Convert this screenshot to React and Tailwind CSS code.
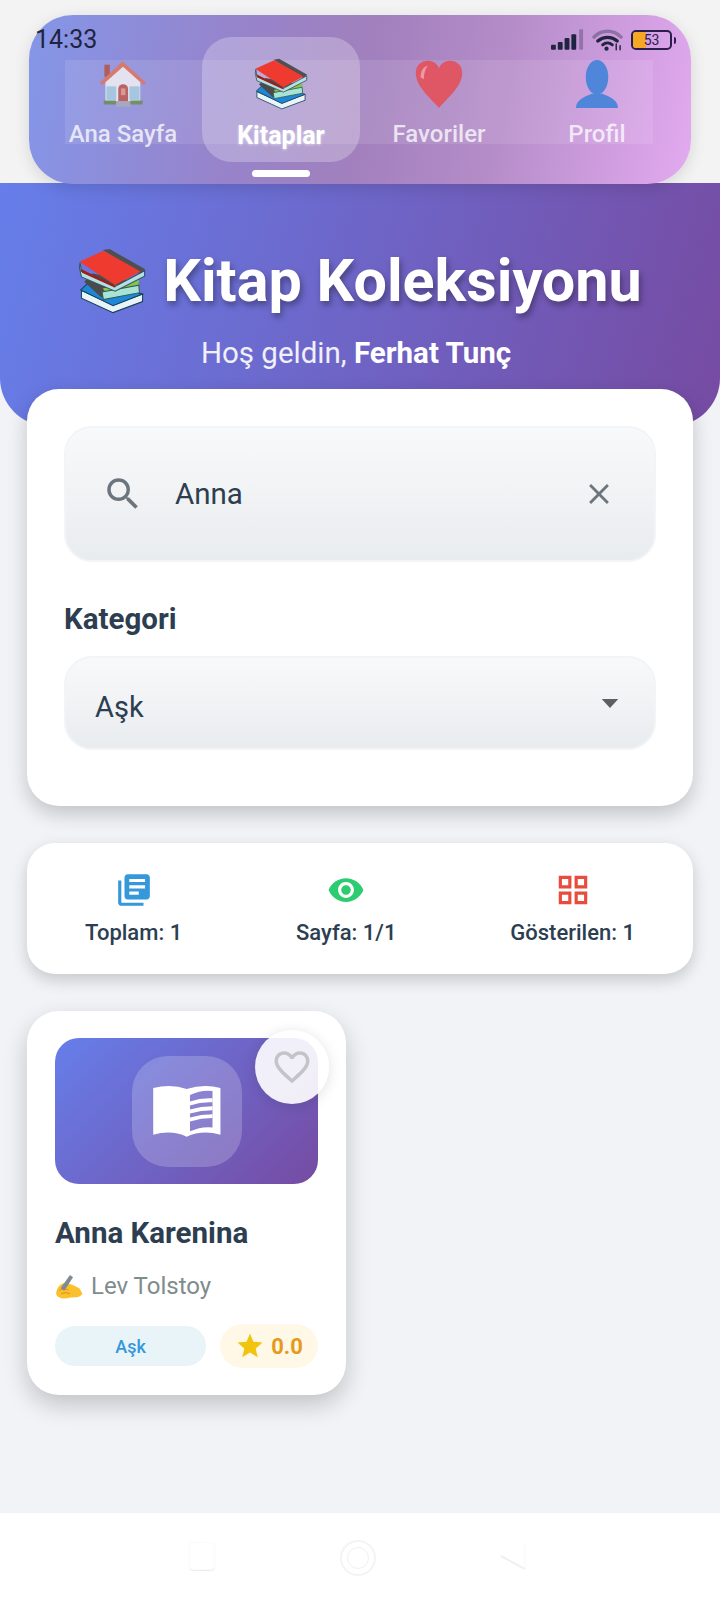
import { MdSearch, MdClose, MdLibraryBooks, MdVisibility, MdGridView, MdFavoriteBorder, MdStar } from 'react-icons/md';

// Emoji drawings: the sandbox has no colour emoji font
const BooksEmoji = ({ className }) => (
  <svg viewBox="28 24 198 192" className={className}>
    <path d="M38 148 130 190 216 158 216 180 130 212 38 170Z" fill="#e8f4f6" stroke="#173f5a" strokeWidth="3" />
    <path d="M36 146 66 118 216 158 130 192Z" fill="#1d87d8" stroke="#173f5a" strokeWidth="3" />
    <path d="M46 122 70 98 205 124 205 150 96 168Z" fill="#4b4b4b" />
    <path d="M100 142 205 116 205 134 108 152Z" fill="#8bc34a" />
    <path d="M98 152 205 132 207 154 102 174Z" fill="#a8e3d3" stroke="#2c5f55" strokeWidth="3" />
    <path d="M34 66 38 92 136 136 222 90 222 106 136 150 38 108 32 80Z" fill="#b4dfe3" stroke="#2f5360" strokeWidth="3" />
    <path d="M100 30 120 27 224 86 208 98Z" fill="#4f4f52" />
    <path d="M32 64 102 32 210 92 136 132Z" fill="#ef3a2f" />
    <path d="M36 84 136 134 136 140 40 96Z" fill="#9c1f1a" />
  </svg>
);

const HouseEmoji = ({ className }) => (
  <svg viewBox="26 30 142 138" className={className}>
    <rect x="42" y="42" width="16" height="36" fill="#b4574b" />
    <path d="M45 92 98 42 148 92V150H45Z" fill="#ecebf0" />
    <path d="M28 95 96 32 165 95 158 102 97 48 36 102Z" fill="#dd7764" />
    <rect x="48" y="106" width="29" height="40" fill="#a8cbe0" />
    <rect x="116" y="106" width="30" height="40" fill="#a8cbe0" />
    <path d="M83 150V114a14.500 14.500 0 0 1 29 0v36Z" fill="#bf5d58" />
    <rect x="91" y="112" width="13" height="20" fill="#de9a8e" />
    <path d="M40 148H76V160H40ZM119 148H155V160H119Z" fill="#6f8f5c" />
    <path d="M80 150H116L120 166H76Z" fill="#a7abb8" />
  </svg>
);

const HeartEmoji = ({ className }) => (
  <svg viewBox="0 0 64 60" className={className}>
    <path d="M32 60C20 46 3 33 3 16 3 7 10 1 18 1c6 0 11 3 14 9 3-6 8-9 14-9 8 0 15 6 15 15 0 17-17 30-29 44Z" fill="#e2535f" />
    <path d="M9 22c0-8 3-13 9-15-3 4-5 10-5 17Z" fill="#f39aa1" />
  </svg>
);

const BustEmoji = ({ className }) => (
  <svg viewBox="0 0 64 64" className={className}>
    <ellipse cx="32" cy="23" rx="15" ry="23" fill="#4f86d9" />
    <path d="M4 64c0-11 11-15 21-19h14c10 4 21 8 21 19Z" fill="#4f86d9" />
  </svg>
);

const WritingHandEmoji = ({ className }) => (
  <svg viewBox="20 16 90 86" className={className}>
    <path d="M24 78Q30 55 46 50 72 48 100 68L108 85Q100 98 70 96 46 102 35 96 22 92 24 78Z" fill="#fbc02d" />
    <path d="M34 74Q48 62 62 72M40 84Q54 76 68 84" stroke="#d98a0a" strokeWidth="3" fill="none" />
    <path d="M38 66 68 24 78 31 50 74Z" fill="#7e8b95" />
  </svg>
);

const OpenBook = () => (
  <svg viewBox="67 116 204 157" className="w-[68px] h-[52px]">
    <path
      fillRule="evenodd"
      fill="#fff"
      d="M67 125Q122 112 168 128 220 112 270 125V266Q215 250 168 272 122 250 67 266ZM178 146Q212 130 246 134V244Q212 240 178 256Z"
    />
    <path d="M178 166Q212 154 246 156V168Q212 166 178 178ZM178 190Q212 180 246 180V192Q212 192 178 202ZM178 214Q212 204 246 204V216Q212 216 178 226Z" fill="#fff" />
  </svg>
);

const SignalIcon = () => (
  <svg viewBox="0 0 34 22" className="w-[33px] h-[22px]">
    <rect x="0" y="16" width="5" height="5" rx="1" fill="#1f2440" />
    <rect x="7" y="13" width="5" height="8" rx="1" fill="#1f2440" />
    <rect x="14" y="9" width="5" height="12" rx="1" fill="#1f2440" />
    <rect x="21" y="5" width="5" height="16" rx="1" fill="#1f2440" />
    <rect x="29" y="0" width="4" height="21" rx="1" fill="#1f2440" fillOpacity="0.3" />
  </svg>
);

const WifiIcon = () => (
  <svg viewBox="0 0 32 22" className="w-[31px] h-[22px]" fill="none" strokeLinecap="round">
    <path d="M2 8C10 0 22 0 30 8" stroke="#1f2440" strokeOpacity="0.35" strokeWidth="3.500" />
    <path d="M6 12c6-5 14-5 20 0" stroke="#1f2440" strokeWidth="3.500" />
    <path d="M11 16c3-2.500 7-2.500 10 0" stroke="#1f2440" strokeWidth="3" />
    <circle cx="15" cy="20" r="2.200" fill="#1f2440" />
    <path d="M25 15v6M29 17v4" stroke="#1f2440" strokeWidth="1.500" />
  </svg>
);

const navItems = [
  { label: 'Ana Sayfa', Icon: HouseEmoji, size: 'w-[48px] h-[48px] opacity-90' },
  { label: 'Kitaplar', Icon: BooksEmoji, size: 'w-[54px] h-[52px]', active: true },
  { label: 'Favoriler', Icon: HeartEmoji, size: 'w-[52px] h-[48px] opacity-95' },
  { label: 'Profil', Icon: BustEmoji, size: 'w-[48px] h-[50px]' },
];

function TopNav() {
  return (
    <div className="absolute left-[29px] top-[15px] w-[662px] h-[169px] rounded-[44px] bg-[linear-gradient(100deg,#8496e8_0%,#9684cc_30%,#a180bd_50%,#b48cc8_70%,#e3aaf0_100%)] shadow-[0_4px_16px_rgba(0,0,0,0.12)]">
      <div className="flex items-center justify-between pl-[6px] pr-[14px] pt-[13px] h-[37px] relative z-10">
        <span className="text-[25px] leading-[28px] text-[#1f2440]">14:33</span>
        <div className="flex items-center gap-[8px] mr-[1px]">
          <SignalIcon />
          <WifiIcon />
          <div className="flex items-center gap-[2px]">
            <div className="relative w-[41px] h-[20px] rounded-[5px] border-2 border-[#2a1e4a] overflow-hidden flex items-center justify-center">
              <div className="absolute left-0 top-0 bottom-0 w-[36%] bg-[#f6a723]" />
              <span className="relative text-[14px] leading-none text-[#2a1e4a]">53</span>
            </div>
            <div className="w-[2px] h-[7px] bg-[#2a1e4a] rounded-r" />
          </div>
        </div>
      </div>
      <div className="absolute left-[36px] top-[45px] w-[588px] h-[84px] bg-white/10" />
      <div className="absolute left-0 top-0 w-full flex pl-[15px] pr-[15px]">
        {navItems.map(({ label, Icon, size, active }) => (
          <div
            key={label}
            className={
              active
                ? 'flex-1 flex flex-col items-center mt-[22px] h-[125px] rounded-[30px] bg-white/25'
                : 'flex-1 flex flex-col items-center mt-[22px] h-[125px]'
            }
          >
            <div className="h-[60px] mt-[17px] flex items-center justify-center">
              <Icon className={size} />
            </div>
            <span className={active ? 'mt-[8px] text-[25px] leading-[28px] font-bold text-white [text-shadow:0_1px_3px_rgba(255,255,255,0.5)]' : 'mt-[6px] text-[24px] leading-[28px] font-medium text-white/75'}>
              {label}
            </span>
          </div>
        ))}
      </div>
      <div className="absolute left-[223px] top-[155px] w-[58px] h-[7px] rounded-full bg-white" />
    </div>
  );
}

function Stat({ Icon, color, label }) {
  return (
    <div className="flex flex-col items-center gap-[12px] pb-[2px]">
      <Icon className={color} size={38} />
      <span className="text-[22px] leading-[24px] font-medium text-[#2c3e50]">{label}</span>
    </div>
  );
}

export default function App() {
  return (
    <div className="relative w-[720px] h-[1600px] flex flex-col bg-[#f1f3f7] font-['Roboto',sans-serif]">
      <div className="h-[183px] bg-[#f3f3f3]" />
      <TopNav />

      <header className="h-[243px] rounded-b-[48px] bg-[linear-gradient(105deg,#667eea_0%,#764ba2_100%)] flex flex-col items-center pt-[62px]">
        <h1 className="flex items-center gap-[17px] text-[59.300px] leading-[72px] font-bold text-white [text-shadow:2px_4px_6px_rgba(0,0,0,0.35)]">
          <BooksEmoji className="w-[68px] h-[66px]" />
          Kitap Koleksiyonu
        </h1>
        <p className="mt-[19px] pr-[8px] text-[29.500px] leading-[34px] text-white/90">
          Hoş geldin, <strong className="font-bold text-white">Ferhat Tunç</strong>
        </p>
      </header>

      <section className="relative mx-[27px] -mt-[37px] h-[417px] rounded-[32px] bg-white px-[37px] pt-[37px] shadow-[0_8px_20px_rgba(0,0,0,0.2)]">
        <div className="flex items-center h-[136px] rounded-[28px] border-2 border-[#f3f4f6] bg-[linear-gradient(180deg,#f8f9fa,#e9ecef)] pl-[38px] pr-[38px]">
          <MdSearch className="text-[#6c757d] ml-[-2px]" size={42} />
          <span className="ml-[31px] flex-1 text-[29.500px] text-[#2c3e50]">Anna</span>
          <MdClose className="text-[#6c757d]" size={34} />
        </div>
        <div className="mt-[40px] text-[29.500px] leading-[34px] font-bold text-[#2c3e50]">Kategori</div>
        <div className="mt-[20px] flex items-center justify-between h-[94px] rounded-[28px] border-2 border-[#f3f4f6] bg-[linear-gradient(180deg,#f8f9fa,#e9ecef)] pl-[29px] pr-[34px]">
          <span className="pt-[10px] text-[29px] text-[#2c3e50]">Aşk</span>
          <svg viewBox="0 0 20 12" className="w-[20px] h-[11px]"><path d="M1 1h18L10 11Z" fill="#5c5f63" /></svg>
        </div>
      </section>

      <section className="relative mx-[27px] mt-[37px] h-[131px] rounded-[28px] bg-white shadow-[0_6px_16px_rgba(0,0,0,0.18)] flex items-center justify-between px-[58px]">
        <Stat Icon={MdLibraryBooks} color="text-[#3498db]" label="Toplam: 1" />
        <Stat Icon={MdVisibility} color="text-[#2ecc71]" label="Sayfa: 1/1" />
        <Stat Icon={MdGridView} color="text-[#e74c3c]" label="Gösterilen: 1" />
      </section>

      <article className="relative ml-[27px] mt-[37px] w-[319px] h-[384px] rounded-[32px] bg-white px-[28px] pt-[27px] shadow-[0_10px_24px_rgba(0,0,0,0.2)]">
        <div className="h-[146px] rounded-[24px] bg-[linear-gradient(135deg,#667eea,#764ba2)] flex items-center justify-center">
          <div className="w-[110px] h-[111px] rounded-[36px] bg-white/20 flex items-center justify-center">
            <OpenBook />
          </div>
        </div>
        <button className="absolute left-[228px] top-[19px] w-[74px] h-[74px] rounded-full bg-white/90 shadow-[0_2px_14px_rgba(0,0,0,0.12)] flex items-center justify-center">
          <MdFavoriteBorder className="text-[#c4c4c8]" size={42} />
        </button>
        <h2 className="mt-[31px] text-[29.500px] leading-[36px] font-bold text-[#2c3e50]">Anna Karenina</h2>
        <div className="mt-[20px] flex items-center gap-[8px] text-[24px] leading-[30px] text-[#7f8c8d]">
          <WritingHandEmoji className="w-[28px] h-[28px]" />
          Lev Tolstoy
        </div>
        <div className="mt-[23px] flex items-center justify-between">
          <span className="w-[151px] h-[40px] rounded-full bg-[#e8f4f8] flex items-center justify-center text-[18px] font-medium text-[#3498db]">Aşk</span>
          <span className="w-[98px] h-[44px] rounded-full bg-[#fff8e6] flex items-center justify-center gap-[6px] text-[22px] font-bold text-[#e59a1c]">
            <MdStar className="text-[#f1c40f]" size={30} />
            0.0
          </span>
        </div>
      </article>

      <footer className="mt-auto h-[87px] bg-white relative">
        <div className="absolute left-[189px] top-[29px] w-[26px] h-[28px] rounded-[4px] border border-[#fafafa] shadow-[0_1px_1px_rgba(0,0,0,0.08)]" />
        <div className="absolute left-[340px] top-[27px] w-[36px] h-[36px] rounded-full border-2 border-[#f4f4f4] flex items-center justify-center">
          <div className="w-[22px] h-[22px] rounded-full border border-[#f0f0f0]" />
        </div>
        <svg viewBox="0 0 28 32" className="absolute left-[499px] top-[27px] w-[28px] h-[32px]" fill="none">
          <path d="M2 16 26 29" stroke="#f0f0f0" strokeWidth="2" />
          <path d="M26 29V4" stroke="#f8f8f8" strokeWidth="1" />
        </svg>
      </footer>
    </div>
  );
}
